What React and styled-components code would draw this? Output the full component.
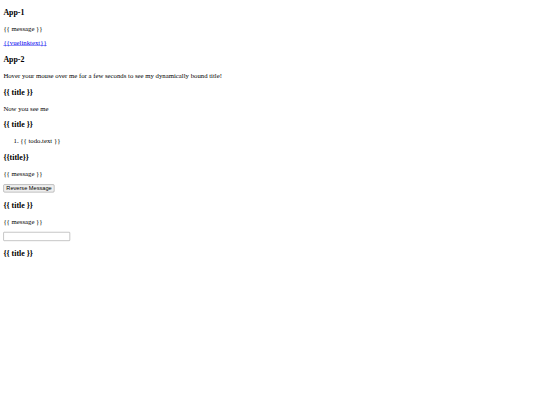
import { createGlobalStyle, styled } from "styled-components";

const Global = createGlobalStyle`
  body {
    margin: 0;
    background: #fff;
  }
`;

const Frame = styled.div`
  width: 540px;
  height: 405px;
  overflow: hidden;
`;

// the reference is a 1280x960 page shown at 540x405
const Page = styled.div`
  display: flow-root;
  width: 1264px;
  padding: 0 8px;
  transform: scale(0.421875);
  transform-origin: 0 0;
  opacity: 0.999;
  color: #000;
  font-family: "Liberation Serif", "Times New Roman", serif;
  font-size: 16px;
`;

const Title = styled.h3`
  font-size: 18.72px;
  font-weight: bold;
  margin: 18.72px 0;
`;

const Text = styled.p`
  margin: 16px 0;
`;

const VueLink = styled.a`
  color: #0000ee;
  text-decoration: underline;
`;

const TodoList = styled.ol`
  margin: 16px 0;
  padding-left: 40px;
`;

const Button = styled.button`
  font-family: "Liberation Sans", Arial, sans-serif;
  font-size: 13.33px;
  padding: 1px 6px;
  margin: 0;
  border: 1px solid #767676;
  border-radius: 3px;
  background: #efefef;
  color: #000;
`;

const TextInput = styled.input`
  display: block;
  width: 152px;
  height: 17px;
  padding: 1px 2px;
  margin: 0;
  border: 1px solid #767676;
  border-radius: 2px;
  font-size: 13.33px;
`;

export default function App() {
  return (
    <Frame>
      <Global />
      <Page>
        <div id="app-1">
          <Title>App-1</Title>
          <Text>{"{{ message }}"}</Text>
          <VueLink href="#">{"{{vuelinktext}}"}</VueLink>
        </div>
        <div id="app-2">
          <Title>App-2</Title>
          <Text>Hover your mouse over me for a few seconds to see my dynamically bound title!</Text>
        </div>
        <div>
          <Title>{"{{ title }}"}</Title>
          <Text>Now you see me</Text>
        </div>
        <div>
          <Title>{"{{ title }}"}</Title>
          <TodoList>
            <li>{"{{ todo.text }}"}</li>
          </TodoList>
        </div>
        <div>
          <Title>{"{{title}}"}</Title>
          <Text>{"{{ message }}"}</Text>
          <Button>Reverse Message</Button>
        </div>
        <div>
          <Title>{"{{ title }}"}</Title>
          <Text>{"{{ message }}"}</Text>
          <TextInput type="text" />
        </div>
        <div>
          <Title>{"{{ title }}"}</Title>
        </div>
      </Page>
    </Frame>
  );
}
